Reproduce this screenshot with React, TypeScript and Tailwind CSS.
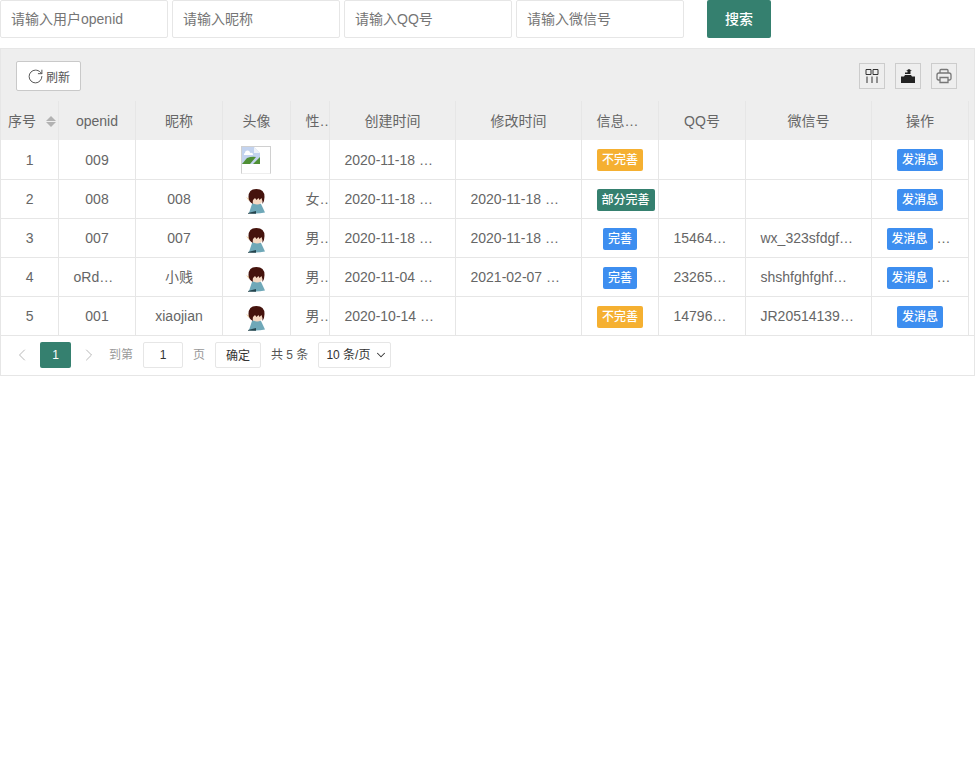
import { RotateCw, ChevronLeft, ChevronRight, ChevronDown } from 'lucide-react';

const cols = [57, 77, 87, 68, 39, 126, 126, 77, 87, 126, 97, 6];

type Row = {
	id: number;
	openid: string;
	nick: string;
	avatar: 'none' | 'ok';
	sex: string;
	created: string;
	updated: string;
	status: '不完善' | '部分完善' | '完善';
	qq: string;
	wx: string;
	more: boolean;
};

const rows: Row[] = [
	{ id: 1, openid: '009', nick: '', avatar: 'none', sex: '', created: '2020-11-18 …', updated: '', status: '不完善', qq: '', wx: '', more: false },
	{ id: 2, openid: '008', nick: '008', avatar: 'ok', sex: '女…', created: '2020-11-18 …', updated: '2020-11-18 …', status: '部分完善', qq: '', wx: '', more: false },
	{ id: 3, openid: '007', nick: '007', avatar: 'ok', sex: '男…', created: '2020-11-18 …', updated: '2020-11-18 …', status: '完善', qq: '15464…', wx: 'wx_323sfdgf…', more: true },
	{ id: 4, openid: 'oRd…', nick: '小贱', avatar: 'ok', sex: '男…', created: '2020-11-04 …', updated: '2021-02-07 …', status: '完善', qq: '23265…', wx: 'shshfghfghf…', more: true },
	{ id: 5, openid: '001', nick: 'xiaojian', avatar: 'ok', sex: '男…', created: '2020-10-14 …', updated: '', status: '不完善', qq: '14796…', wx: 'JR20514139…', more: false }
];

const heads = ['序号', 'openid', '昵称', '头像', '性…', '创建时间', '修改时间', '信息…', 'QQ号', '微信号', '操作'];

const Avatar = () => (
	<svg width="20" height="25" viewBox="0 0 20 25" className="mx-auto mt-[3px] block">
		<path d="M3 24 L6 15 Q11 12 15 15 L19 23.500 Q11 25 3 24Z" fill="#6fa8b8" />
		<path d="M2 24 L10 22 L10 24.800 L2 24.800Z" fill="#24444d" />
		<path d="M0 8 L4 10 L3 12Z" fill="#f0d2a6" />
		<ellipse cx="11" cy="11" rx="5.500" ry="4.500" fill="#f5d8c2" />
		<path d="M2.500 8 Q2.500 0 10.500 0 Q18.500 0 18.500 8 Q18.500 12 16.500 15 Q16.500 11 15.500 9 L13.500 11 L12.500 9 L10.500 11 L9 9 L7 11 Q6.500 13 7 15 Q2.500 13 2.500 8Z" fill="#45130d" />
	</svg>
);

const BrokenImage = () => (
	<div className="mx-auto h-[28px] w-[30px] border border-[#d0d0d0] border-b-[#eee] bg-white">
		<svg width="18" height="17" viewBox="0 0 18 17" className="block">
			<path d="M0 0H12L18 6V17H0Z" fill="#c3d3ef" />
			<path d="M12 0L18 6H12Z" fill="#eef2f8" />
			<path d="M3 6a2 2 0 0 1 5 0a2 2 0 0 1 3 2H2a1.500 1.500 0 0 1 1-2Z" fill="#fff" />
			<path d="M0 17L5 11Q10 9 14 10L8 17Z" fill="#4f8f35" />
			<path d="M11 17L18 10V17Z" fill="#4f8f35" />
		</svg>
	</div>
);

const Badge = ({ status }: { status: Row['status'] }) => {
	if (status === '不完善') {
		return <span className="inline-block h-[22px] rounded-[2px] bg-[#f5b031] px-[5px] align-middle text-[12px] leading-[23px] font-medium text-white">不完善</span>;
	}
	if (status === '部分完善') {
		return <span className="inline-block h-[22px] rounded-[2px] bg-[#35806f] px-[5px] align-middle text-[12px] leading-[23px] font-medium text-white">部分完善</span>;
	}
	return <span className="inline-block h-[22px] rounded-[2px] bg-[#3d8ef0] px-[5px] align-middle text-[12px] leading-[23px] font-medium text-white">完善</span>;
};

const SendBtn = () => (
	<span className="inline-block h-[22px] rounded-[2px] bg-[#3d8ef0] px-[5px] align-middle text-[12px] leading-[23px] font-medium text-white">发消息</span>
);

const td = 'overflow-hidden whitespace-nowrap border-r border-b border-[#e6e6e6] p-0 pt-[2px] pl-[1px]';
const tdImg = 'overflow-hidden whitespace-nowrap border-r border-b border-[#e6e6e6] p-0 pt-[2px]';
const tdLeft = 'overflow-hidden whitespace-nowrap border-r border-b border-[#e6e6e6] p-0 pt-[2px] pl-[15px] text-left';

const App = () => {
	return (
		<div className="min-h-[767px] bg-white font-['Liberation_Sans','Noto_Sans_CJK_SC',sans-serif] text-[14px] text-[#666]">
			<div className="flex h-[38px] items-start">
				{['请输入用户openid', '请输入昵称', '请输入QQ号', '请输入微信号'].map((p) => (
					<input
						key={p}
						placeholder={p}
						className="mr-1 h-[38px] w-[168px] rounded-[2px] border border-[#e6e6e6] bg-white pl-[10px] text-[14px] outline-none placeholder:text-[#757575]"
					/>
				))}
				<button className="ml-[19px] h-[38px] w-[64px] rounded-[2px] bg-[#35806f] text-[14px] font-medium text-white">搜索</button>
			</div>

			<div className="mt-[10px] border border-[#e6e6e6]">
				<div className="flex h-[52px] items-center justify-between bg-[#eee] pl-[15px] pr-[17px]">
					<button className="mt-[2px] flex h-[30px] w-[65px] items-center justify-center rounded-[2px] border border-[#c9c9c9] bg-white text-[12px] text-[#555]">
						<RotateCw size={17} strokeWidth={1.4} className="mr-[2px]" />
						<span className="mt-[3px]">刷新</span>
					</button>
					<div className="mt-[2px] flex gap-[10px]">
						<div className="flex h-[26px] w-[26px] items-center justify-center border border-[#ccc]">
							<svg width="14" height="14" viewBox="0 0 14 14" fill="none" stroke="#333" strokeWidth="1">
								<path d="M1 .5h5v5h-5zM8 .5h5v5h-5zM2 7.500v6.500M7 7.500v6.500M12 7.500v6.500" />
							</svg>
						</div>
						<div className="flex h-[26px] w-[26px] items-center justify-center border border-[#ccc]">
							<svg width="14" height="14" viewBox="0 0 14 14">
								<path d="M0 7.500h3l1-1.500h6l1 1.500h3V14H0Z" fill="#222" />
								<path d="M4 5V3.500h2.500V1.800H5L8 0l3 1.800H9.500V5Z" fill="#222" />
							</svg>
						</div>
						<div className="flex h-[26px] w-[26px] items-center justify-center border border-[#ccc]">
							<svg width="16" height="16" viewBox="0 0 16 16" fill="none" stroke="#777" strokeWidth="1.300">
								<path d="M4 5V2.500a1 1 0 0 1 1-1h6a1 1 0 0 1 1 1V5M4 12H2.500A1.500 1.500 0 0 1 1 10.500V7a2 2 0 0 1 2-2h10a2 2 0 0 1 2 2v3.500a1.500 1.500 0 0 1-1.500 1.500H12" />
								<path d="M4 9.500h8v5H4z" />
							</svg>
						</div>
					</div>
				</div>

				<table className="w-[973px] table-fixed border-collapse text-center">
					<colgroup>
						{cols.map((w, i) => (
							<col key={i} style={{ width: w }} />
						))}
					</colgroup>
					<thead>
						<tr className="h-[39px] bg-[#eee]">
							{heads.map((h, i) => (
								<th
									key={h}
									className={
										i === 4 || i === 7
											? 'overflow-hidden whitespace-nowrap border-r border-[#e6e6e6] p-0 pt-[1px] pl-[15px] text-left font-normal text-[#666]'
											: 'overflow-hidden whitespace-nowrap border-r border-[#e6e6e6] p-0 pt-[1px] pl-[1px] font-normal text-[#666]'
									}
								>
									{i === 0 ? (
										<div className="flex items-center pl-[6px]">
											序号
											<span className="ml-[10px] flex flex-col gap-[1px]">
												<span className="h-0 w-0 border-x-[5px] border-b-[5px] border-x-transparent border-b-[#b2b2b2]" />
												<span className="h-0 w-0 border-x-[5px] border-t-[5px] border-x-transparent border-t-[#b2b2b2]" />
											</span>
										</div>
									) : (
										h
									)}
								</th>
							))}
							<th className="bg-[#eee] p-0" />
						</tr>
					</thead>
					<tbody>
						{rows.map((r) => (
							<tr key={r.id} className="h-[39px]">
								<td className={td}>{r.id}</td>
								<td className={r.openid.length > 3 ? tdLeft : td}>{r.openid}</td>
								<td className={td}>{r.nick}</td>
								<td className={tdImg}>{r.avatar === 'ok' ? <Avatar /> : <BrokenImage />}</td>
								<td className={tdLeft}>{r.sex}</td>
								<td className={tdLeft}>{r.created}</td>
								<td className={tdLeft}>{r.updated}</td>
								<td className={r.status === '部分完善' ? tdLeft : td}><Badge status={r.status} /></td>
								<td className={tdLeft}>{r.qq}</td>
								<td className={tdLeft}>{r.wx}</td>
								<td className={td}>
									{r.more ? (
										<div className="flex items-center pl-[14px]">
											<SendBtn />
											<span className="ml-[4px]">…</span>
										</div>
									) : (
										<SendBtn />
									)}
								</td>
								<td className={r.id === 5 ? 'border-b border-[#e6e6e6] p-0' : 'p-0'} />
							</tr>
						))}
					</tbody>
				</table>

				<div className="flex h-[39px] items-center pl-[11px] text-[12px] text-[#999]">
					<ChevronLeft size={20} strokeWidth={1} className="text-[#aaa]" />
					<span className="ml-[8px] h-[26px] w-[31px] rounded-[2px] bg-[#35806f] text-center leading-[26px] text-white">1</span>
					<ChevronRight size={20} strokeWidth={1} className="ml-[8px] text-[#aaa]" />
					<span className="ml-[10px]">到第</span>
					<span className="ml-[10px] h-[26px] w-[40px] rounded-[2px] border border-[#e6e6e6] text-center leading-[25px] text-[#333]">1</span>
					<span className="ml-[10px]">页</span>
					<span className="ml-[10px] h-[26px] w-[46px] rounded-[2px] border border-[#e6e6e6] text-center leading-[27px] text-[#333]">确定</span>
					<span className="ml-[10px] text-[#555]">共 5 条</span>
					<span className="ml-[10px] flex h-[26px] w-[73px] items-center rounded-[2px] border border-[#e6e6e6] pl-[7px] text-[#333]">
						10 条/页
						<ChevronDown size={14} strokeWidth={1.75} className="ml-[4px]" />
					</span>
				</div>
			</div>
		</div>
	);
};

export default App;
